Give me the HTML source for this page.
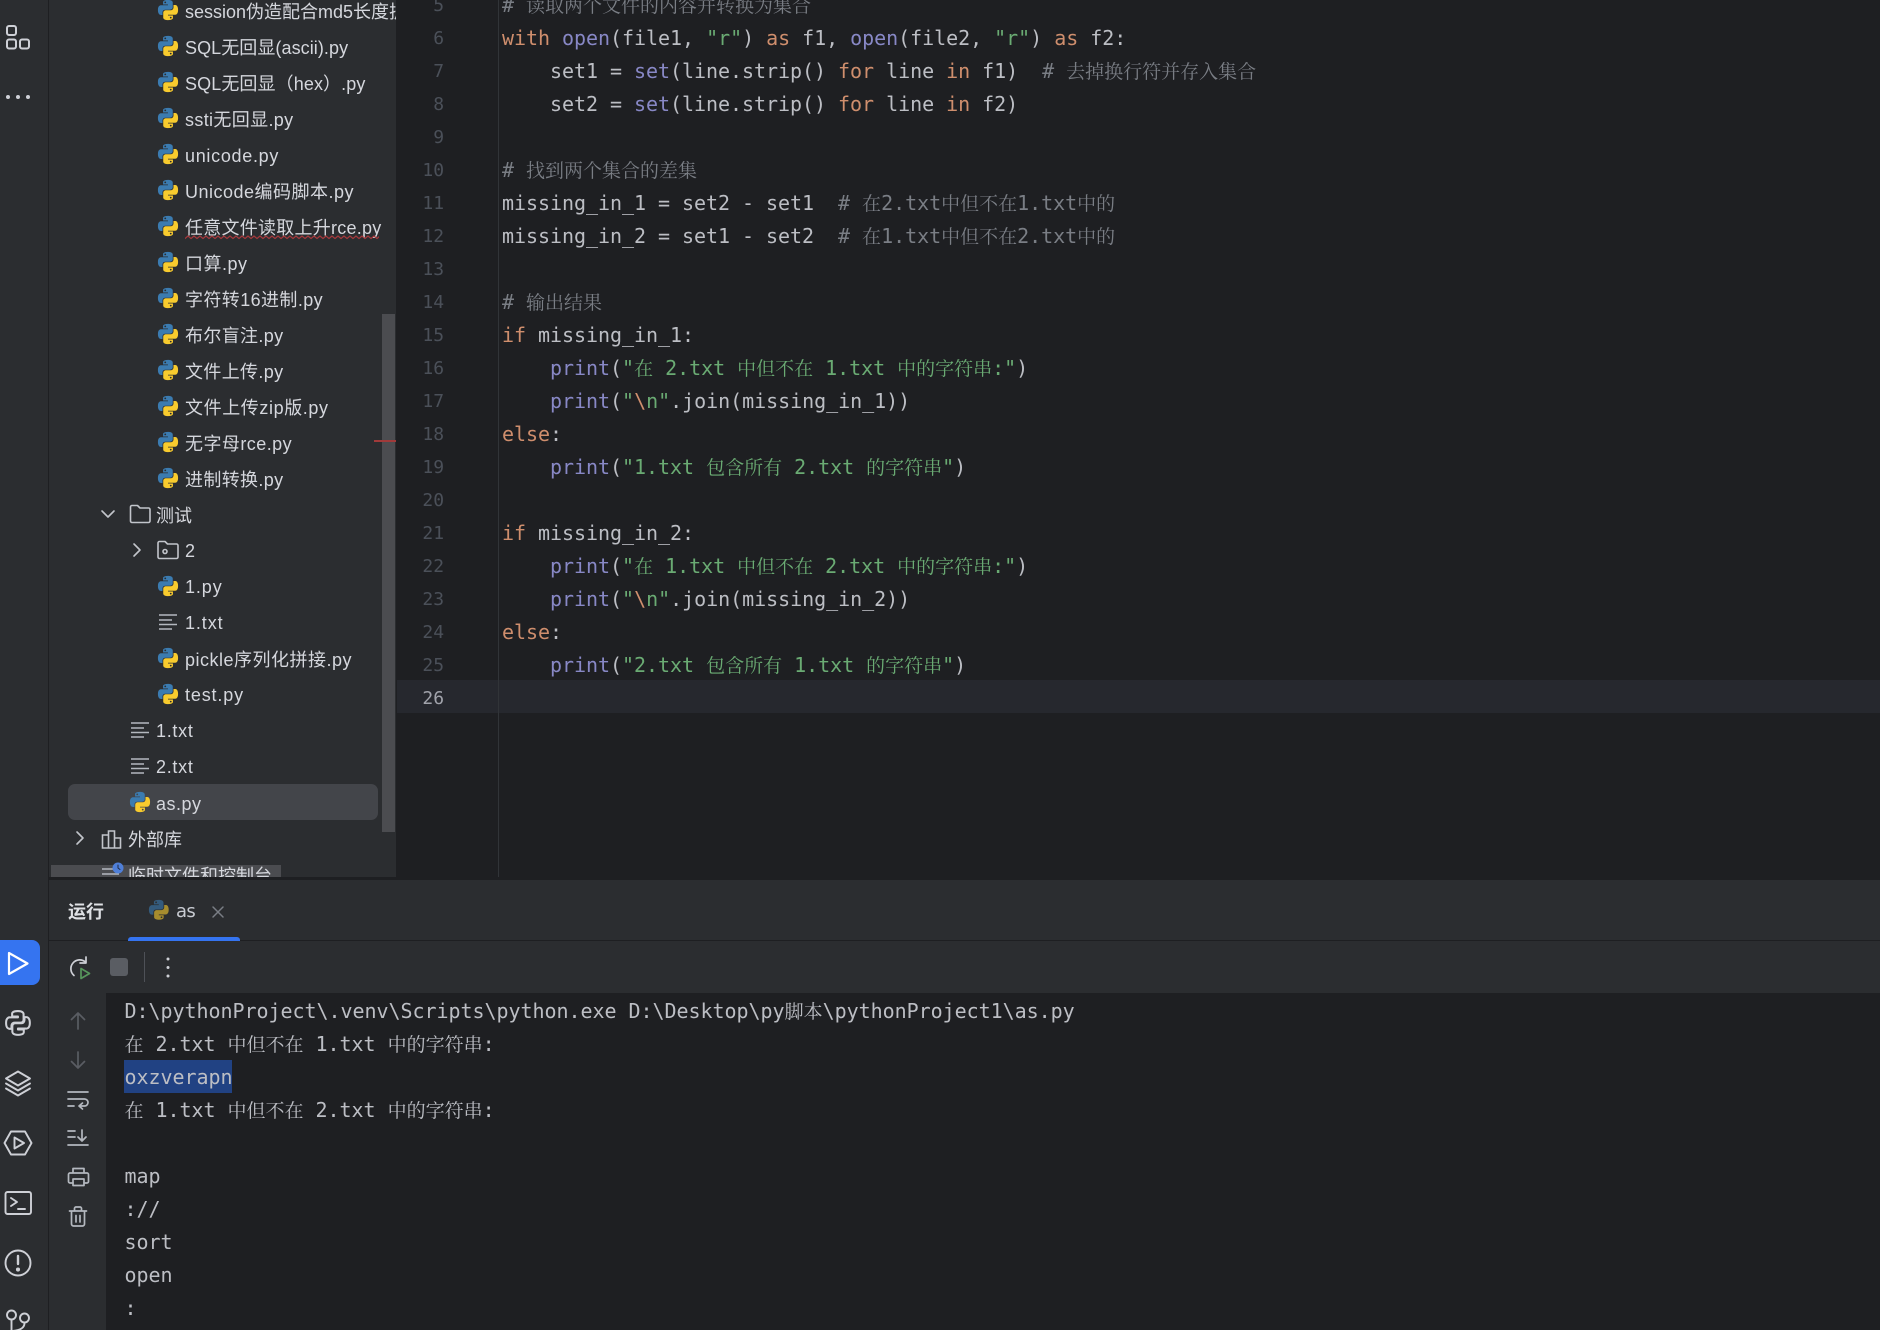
<!DOCTYPE html>
<html lang="zh"><head><meta charset="utf-8"><title>as.py</title>
<style>
html,body{margin:0;padding:0;background:#1e1f22}
#p{position:relative;width:1880px;height:1330px;overflow:hidden;background:#1e1f22}
.a{position:absolute}
#tree{left:49px;top:0;width:347px;height:877px;background:#2b2d30;overflow:hidden}
.t{position:absolute;height:36px;line-height:36px;font:18px/36px "Liberation Sans","Noto Sans CJK SC",sans-serif;color:#d5d7dd;white-space:nowrap}
.c,.n{position:absolute;height:33px;line-height:33px;font-family:"DejaVu Sans Mono","Noto Serif CJK SC",monospace;font-size:20px;letter-spacing:-.04px;white-space:pre;color:#bcbec4;transform:translateY(2px)}
.c{left:502px}
.n{left:397px;width:47px;text-align:right;font-size:18px;color:#4b5059}
.k{color:#cf8e6d}.b{color:#8888c6}.s{color:#6aab73}.m{color:#7a7e85}
.z{font-family:"Noto Serif CJK SC",serif;font-size:19px;letter-spacing:0;line-height:0}
.o{left:124.5px;transform:translateY(1px)}
</style></head><body><div id="p">

<div class="a" style="left:397px;top:680px;width:1483px;height:33px;background:#26282e"></div>
<div class="a" style="left:498px;top:0;width:1px;height:877px;background:#313438"></div>

<div class="n" style="top:-13px">5</div><div class="c" style="top:-13px"><span class="m"># <span class="z">读取两个文件的内容并转换为集合</span></span></div>
<div class="n" style="top:20px">6</div><div class="c" style="top:20px"><span class="k">with</span> <span class="b">open</span>(file1, <span class="s">"r"</span>) <span class="k">as</span> f1, <span class="b">open</span>(file2, <span class="s">"r"</span>) <span class="k">as</span> f2:</div>
<div class="n" style="top:53px">7</div><div class="c" style="top:53px">    set1 = <span class="b">set</span>(line.strip() <span class="k">for</span> line <span class="k">in</span> f1)  <span class="m"># <span class="z">去掉换行符并存入集合</span></span></div>
<div class="n" style="top:86px">8</div><div class="c" style="top:86px">    set2 = <span class="b">set</span>(line.strip() <span class="k">for</span> line <span class="k">in</span> f2)</div>
<div class="n" style="top:119px">9</div>
<div class="n" style="top:152px">10</div><div class="c" style="top:152px"><span class="m"># <span class="z">找到两个集合的差集</span></span></div>
<div class="n" style="top:185px">11</div><div class="c" style="top:185px">missing_in_1 = set2 - set1  <span class="m"># <span class="z">在</span>2.txt<span class="z">中但不在</span>1.txt<span class="z">中的</span></span></div>
<div class="n" style="top:218px">12</div><div class="c" style="top:218px">missing_in_2 = set1 - set2  <span class="m"># <span class="z">在</span>1.txt<span class="z">中但不在</span>2.txt<span class="z">中的</span></span></div>
<div class="n" style="top:251px">13</div>
<div class="n" style="top:284px">14</div><div class="c" style="top:284px"><span class="m"># <span class="z">输出结果</span></span></div>
<div class="n" style="top:317px">15</div><div class="c" style="top:317px"><span class="k">if</span> missing_in_1:</div>
<div class="n" style="top:350px">16</div><div class="c" style="top:350px">    <span class="b">print</span>(<span class="s">"<span class="z">在</span> 2.txt <span class="z">中但不在</span> 1.txt <span class="z">中的字符串</span>:"</span>)</div>
<div class="n" style="top:383px">17</div><div class="c" style="top:383px">    <span class="b">print</span>(<span class="s">"<span class="k">\</span>n"</span>.join(missing_in_1))</div>
<div class="n" style="top:416px">18</div><div class="c" style="top:416px"><span class="k">else</span>:</div>
<div class="n" style="top:449px">19</div><div class="c" style="top:449px">    <span class="b">print</span>(<span class="s">"1.txt <span class="z">包含所有</span> 2.txt <span class="z">的字符串</span>"</span>)</div>
<div class="n" style="top:482px">20</div>
<div class="n" style="top:515px">21</div><div class="c" style="top:515px"><span class="k">if</span> missing_in_2:</div>
<div class="n" style="top:548px">22</div><div class="c" style="top:548px">    <span class="b">print</span>(<span class="s">"<span class="z">在</span> 1.txt <span class="z">中但不在</span> 2.txt <span class="z">中的字符串</span>:"</span>)</div>
<div class="n" style="top:581px">23</div><div class="c" style="top:581px">    <span class="b">print</span>(<span class="s">"<span class="k">\</span>n"</span>.join(missing_in_2))</div>
<div class="n" style="top:614px">24</div><div class="c" style="top:614px"><span class="k">else</span>:</div>
<div class="n" style="top:647px">25</div><div class="c" style="top:647px">    <span class="b">print</span>(<span class="s">"2.txt <span class="z">包含所有</span> 1.txt <span class="z">的字符串</span>"</span>)</div>
<div class="n" style="top:680px;color:#a1a3ab">26</div>

<div class="a" style="left:0;top:0;width:48px;height:1330px;background:#2b2d30"></div>
<div class="a" style="left:48px;top:0;width:1px;height:1330px;background:#1e1f22"></div>

<div class="a" id="tree">
<div class="a" style="left:19px;top:784px;width:310px;height:36px;background:#43454a;border-radius:7px"></div>
<div class="a" style="left:2px;top:865px;width:230px;height:12px;background:#4b4c50"></div>
<div class="t" style="left:136px;top:-6px">session伪造配合md5长度扩展.py</div>
<div class="t" style="left:136px;top:30px;letter-spacing:.07px">SQL无回显(ascii).py</div>
<div class="t" style="left:136px;top:66px;letter-spacing:.1px">SQL无回显（hex）.py</div>
<div class="t" style="left:136px;top:102px;letter-spacing:.35px">ssti无回显.py</div>
<div class="t" style="left:136px;top:138px;letter-spacing:.7px">unicode.py</div>
<div class="t" style="left:136px;top:174px;letter-spacing:.5px">Unicode编码脚本.py</div>
<div class="t" style="left:136px;top:210px;letter-spacing:.25px">任意文件读取上升rce.py</div>
<div class="t" style="left:136px;top:246px;letter-spacing:.5px">口算.py</div>
<div class="t" style="left:136px;top:282px;letter-spacing:.4px">字符转16进制.py</div>
<div class="t" style="left:136px;top:318px;letter-spacing:.35px">布尔盲注.py</div>
<div class="t" style="left:136px;top:354px;letter-spacing:.35px">文件上传.py</div>
<div class="t" style="left:136px;top:390px;letter-spacing:.6px">文件上传zip版.py</div>
<div class="t" style="left:136px;top:426px;letter-spacing:.45px">无字母rce.py</div>
<div class="t" style="left:136px;top:462px;letter-spacing:.35px">进制转换.py</div>
<div class="t" style="left:107px;top:498px">测试</div>
<div class="t" style="left:136px;top:533px">2</div>
<div class="t" style="left:136px;top:569px;letter-spacing:.9px">1.py</div>
<div class="t" style="left:136px;top:605px;letter-spacing:.9px">1.txt</div>
<div class="t" style="left:136px;top:642px;letter-spacing:.5px">pickle序列化拼接.py</div>
<div class="t" style="left:136px;top:677px;letter-spacing:.85px">test.py</div>
<div class="t" style="left:107px;top:713px;letter-spacing:.7px">1.txt</div>
<div class="t" style="left:107px;top:749px;letter-spacing:.7px">2.txt</div>
<div class="t" style="left:107px;top:786px;letter-spacing:.5px">as.py</div>
<div class="t" style="left:79px;top:822px">外部库</div>
<div class="t" style="left:79px;top:858px">临时文件和控制台</div>
<div class="a" style="left:333px;top:314px;width:13px;height:518px;background:#4b4c50"></div>
<div class="a" style="left:325px;top:440px;width:22px;height:2px;background:#a03a3a"></div>
</div>

<div class="a" style="left:49px;top:877px;width:1831px;height:3px;background:#1e1f22"></div>
<div class="a" style="left:49px;top:880px;width:1831px;height:113px;background:#2b2d30"></div>
<div class="a" style="left:49px;top:940px;width:1831px;height:1px;background:#1e1f22"></div>
<div class="a" style="left:128px;top:937px;width:112px;height:4px;background:#3574f0;border-radius:3px 3px 0 0"></div>
<div class="a" style="left:49px;top:993px;width:57px;height:337px;background:#2b2d30"></div>
<div class="a" style="left:68px;top:894px;font:bold 18px/36px 'Liberation Sans','Noto Sans CJK SC',sans-serif;color:#dfe1e5">运行</div>
<div class="a" style="left:176px;top:894px;font:18px/36px 'DejaVu Sans',sans-serif;color:#c9ccd3;letter-spacing:-.6px">as</div>

<div class="a" style="left:124px;top:1060px;width:108px;height:33px;background:#214283"></div>
<div class="c o" style="top:994px">D:\pythonProject\.venv\Scripts\python.exe D:\Desktop\py<span class="z">脚本</span>\pythonProject1\as.py</div>
<div class="c o" style="top:1027px"><span class="z">在</span> 2.txt <span class="z">中但不在</span> 1.txt <span class="z">中的字符串</span>:</div>
<div class="c o" style="top:1060px">oxzverapn</div>
<div class="c o" style="top:1093px"><span class="z">在</span> 1.txt <span class="z">中但不在</span> 2.txt <span class="z">中的字符串</span>:</div>
<div class="c o" style="top:1159px">map</div>
<div class="c o" style="top:1192px">://</div>
<div class="c o" style="top:1225px">sort</div>
<div class="c o" style="top:1258px">open</div>
<div class="c o" style="top:1291px">:</div>

<div class="a" style="left:0;top:940px;width:40px;height:45px;background:#3574f0;border-radius:0 8px 8px 0"></div>
<div class="a" style="left:110px;top:958px;width:18px;height:18px;background:#5a5d63;border-radius:3px"></div>
<div class="a" style="left:144px;top:952px;width:1px;height:30px;background:#4e5157"></div>

<svg class="a" style="left:0;top:0" width="1880" height="1330" viewBox="0 0 1880 1330" fill="none" stroke-linecap="round" stroke-linejoin="round">
<defs>
<symbol id="py" viewBox="0 0 24 24">
<path fill="#3b7bb0" d="M11.900 1C6.300 1 6.600 3.400 6.600 3.400V6h5.400v.8H4.500S1 6.400 1 12s3.100 5.400 3.100 5.400H6v-2.600s-.1-3.100 3-3.100h5.300s2.900 0 2.900-2.800V4s.4-3-5.300-3zM9 2.700a1 1 0 110 2 1 1 0 010-2z"/>
<path fill="#f8cb2e" d="M12.100 23c5.600 0 5.300-2.400 5.300-2.400V18h-5.400v-.8h7.500S23 17.600 23 12s-3.100-5.400-3.100-5.400H18v2.600s.1 3.100-3 3.100H9.700s-2.900 0-2.900 2.800V20s-.4 3 5.300 3zM15 21.300a1 1 0 110-2 1 1 0 010 2z"/>
</symbol>
<symbol id="tx" viewBox="0 0 18 16">
<path stroke="#b4b8bf" stroke-width="1.500" stroke-linecap="butt" d="M0 1h18M0 6h13M0 10.500h18M0 15h13"/>
</symbol>
<pattern id="sq" width="6" height="5" patternUnits="userSpaceOnUse" x="185" y="235">
<path d="M0 3.500L3 1L6 3.500" stroke="#a5383c" stroke-width="1.200" fill="none"/>
</pattern>
</defs>

<use href="#py" x="157" y="-1" width="22" height="22"/>
<use href="#py" x="157" y="35" width="22" height="22"/>
<use href="#py" x="157" y="71" width="22" height="22"/>
<use href="#py" x="157" y="107" width="22" height="22"/>
<use href="#py" x="157" y="143" width="22" height="22"/>
<use href="#py" x="157" y="179" width="22" height="22"/>
<use href="#py" x="157" y="215" width="22" height="22"/>
<use href="#py" x="157" y="251" width="22" height="22"/>
<use href="#py" x="157" y="287" width="22" height="22"/>
<use href="#py" x="157" y="323" width="22" height="22"/>
<use href="#py" x="157" y="359" width="22" height="22"/>
<use href="#py" x="157" y="395" width="22" height="22"/>
<use href="#py" x="157" y="431" width="22" height="22"/>
<use href="#py" x="157" y="467" width="22" height="22"/>
<use href="#py" x="157" y="575" width="22" height="22"/>
<use href="#py" x="157" y="647" width="22" height="22"/>
<use href="#py" x="157" y="683" width="22" height="22"/>
<use href="#py" x="129" y="791" width="22" height="22"/>
<use href="#tx" x="159" y="614" width="18" height="16"/>
<use href="#tx" x="131" y="722" width="18" height="16"/>
<use href="#tx" x="131" y="758" width="18" height="16"/>
<rect x="185" y="235" width="194" height="5" fill="url(#sq)"/>

<g stroke="#c2c5cb" stroke-width="1.600">
<path d="M102 511l6 6 6-6"/>
<path d="M130.500 521v-14a1.500 1.500 0 0 1 1.500-1.500h5.500l2.500 2.500h8.500a1.500 1.500 0 0 1 1.500 1.500v11.500a1.500 1.500 0 0 1-1.500 1.500h-16.500a1.500 1.500 0 0 1-1.500-1.500z"/>
<path d="M134 544l6 6-6 6"/>
<path d="M158 557v-14a1.500 1.500 0 0 1 1.500-1.500h5.500l2.500 2.500h9a1.500 1.500 0 0 1 1.500 1.500v11.500a1.500 1.500 0 0 1-1.500 1.500h-17a1.500 1.500 0 0 1-1.500-1.500z"/>
<circle cx="165" cy="551.500" r="2"/>
<path d="M77 832l6 6-6 6"/>
<path d="M102.500 848v-13h6v13zM108.500 848v-17h6v17zM114.500 848v-10h6v10z" stroke-linecap="butt" stroke-linejoin="miter"/>
</g>
<path d="M102 869h15M102 874h17" stroke="#b4b8bf" stroke-width="1.500" stroke-linecap="butt"/>
<circle cx="118" cy="868" r="5.500" fill="#4f7fd8"/>
<path d="M118 865v3l2 1.500" stroke="#1e2a44" stroke-width="1"/>

<g stroke="#ced0d6" stroke-width="2">
<rect x="7" y="26" width="9" height="9" rx="2"/>
<rect x="7" y="39.500" width="9" height="9" rx="2"/>
<rect x="20" y="39.500" width="9" height="9" rx="2"/>
</g>
<g fill="#ced0d6"><circle cx="8" cy="97" r="2"/><circle cx="18" cy="97" r="2"/><circle cx="28" cy="97" r="2"/></g>

<path d="M9 953L27.500 963.500L9 974Z" stroke="#fff" stroke-width="2.200"/>

<g stroke="#ced0d6" stroke-width="1.900">
<g transform="translate(5 1010) scale(1.080)">
<path d="M11.900 1C6.300 1 6.600 3.400 6.600 3.400V6h5.400v.8H4.500S1 6.400 1 12s3.100 5.400 3.100 5.400H6v-2.600s-.1-3.100 3-3.100h5.300s2.900 0 2.900-2.800V4s.4-3-5.300-3z"/>
<path d="M12.100 23c5.600 0 5.300-2.400 5.300-2.400V18h-5.400v-.8h7.500S23 17.600 23 12s-3.100-5.400-3.100-5.400H18v2.600s.1 3.100-3 3.100H9.700s-2.900 0-2.900 2.800V20s-.4 3 5.300 3z"/>
</g>
<path d="M18 1071.500L30 1078.500L18 1085.500L6 1078.500Z"/>
<path d="M6 1083.500L18 1090.500L30 1083.500"/>
<path d="M6 1088.500L18 1095.500L30 1088.500"/>
<path d="M11 1131.500H25L31.500 1143L25 1154.500H11L4.500 1143Z"/>
<path d="M14.500 1137.500L24 1143L14.500 1148.500Z"/>
<rect x="5.500" y="1192" width="25.500" height="22" rx="2"/>
<path d="M11 1198l6 4-6 4M18 1209h7"/>
<circle cx="18" cy="1263" r="12.500"/>
<path d="M18 1256v8" stroke-width="2.400"/>
<circle cx="18" cy="1269.500" r="1.100" fill="#ced0d6"/>
<circle cx="11.500" cy="1315" r="4.500"/>
<circle cx="24.500" cy="1318" r="4.500"/>
<path d="M11.500 1320v12M24.500 1323c0 5-4 7-12 8"/>
</g>

<path d="M213 907l10 10M223 907l-10 10" stroke="#7a7e85" stroke-width="1.500"/>
<g transform="translate(148 899) scale(.9)" opacity=".6"><use href="#py" width="24" height="24"/></g>

<path d="M85.500 962A8.800 8.800 0 1 0 74 975.500" stroke="#ced0d6" stroke-width="1.700"/>
<path d="M86 957v6h-6" stroke="#ced0d6" stroke-width="1.700"/>
<path d="M81 968.500L89.500 973.500L81 978.500Z" stroke="#57965c" stroke-width="1.700"/>
<g fill="#ced0d6"><circle cx="168" cy="959" r="1.500"/><circle cx="168" cy="967.500" r="1.500"/><circle cx="168" cy="976" r="1.500"/></g>

<g stroke="#5a5d63" stroke-width="1.700">
<path d="M78 1013v16M71.500 1019.500L78 1013l6.500 6.500"/>
<path d="M78 1052v16M71.500 1061.500L78 1068l6.500-6.500"/>
</g>
<g stroke="#b4b8bf" stroke-width="1.700">
<path d="M68 1092h20M68 1099h16.500a3.500 3.500 0 0 1 0 7H79M82.500 1103l-3.500 3 3.500 3M68 1106h6"/>
<path d="M68 1131h7M68 1137h7M68 1145h20M82 1130v11M78 1137l4 4 4-4"/>
<path d="M73 1173v-4.500h11v4.500M73 1183h-3a1.500 1.500 0 0 1-1.500-1.500v-7a1.500 1.500 0 0 1 1.500-1.500h17a1.500 1.500 0 0 1 1.500 1.500v7a1.500 1.500 0 0 1-1.500 1.500h-3"/>
<rect x="73" y="1179" width="11" height="6.500"/>
<path d="M69.500 1211h17M74.500 1211v-2.500a1.500 1.500 0 0 1 1.500-1.500h4a1.500 1.500 0 0 1 1.500 1.500v2.500M71.500 1211v13a2 2 0 0 0 2 2h9a2 2 0 0 0 2-2v-13M76 1215.500v6.500M80 1215.500v6.500"/>
</g>
</svg>
</div></body></html>
